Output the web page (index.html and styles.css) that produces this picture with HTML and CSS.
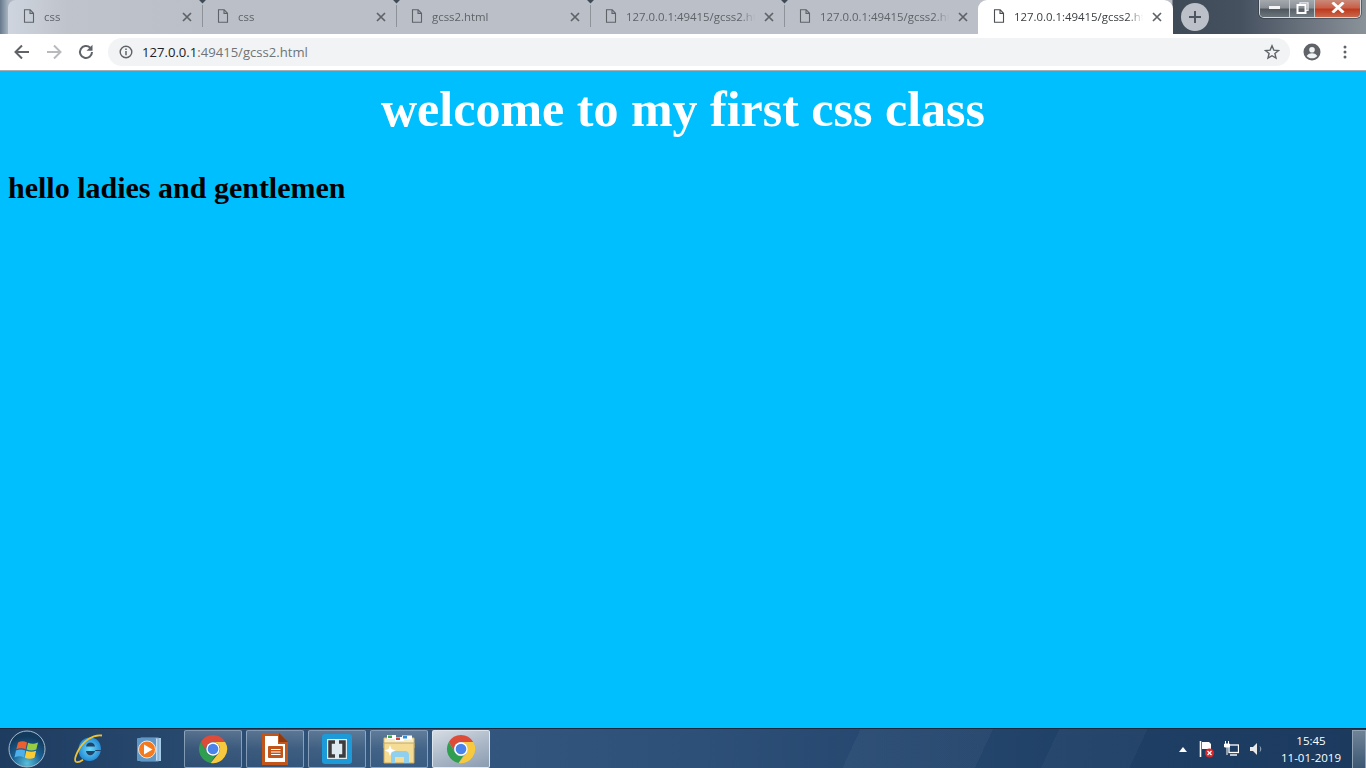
FILE: index.html
```html
<!DOCTYPE html>
<html lang="en">
<head>
<meta charset="utf-8">
<title>gcss2.html</title>
<link rel="stylesheet" href="styles.css">
</head>
<body>
<svg class="defs" width="0" height="0" aria-hidden="true">
  <symbol id="file" viewBox="0 0 12 14"><path d="M1.500 .8h5.700l3.300 3.400v9H1.500zM7 .8v3.600h3.500" fill="none" stroke="currentColor" stroke-width="1.100"/></symbol>
  <symbol id="close" viewBox="0 0 10 10"><path d="M1 1l8 8M9 1l-8 8" fill="none" stroke="currentColor" stroke-width="1.700"/></symbol>
  <symbol id="chrome" viewBox="0 0 32 32">
    <path d="M16 1A15 15 0 0 1 29 8.500H16A7.500 7.500 0 0 0 9.500 19.750L3 8.500A15 15 0 0 1 16 1z" fill="#dd4b39"/>
    <path d="M3 8.500L9.500 19.750A7.500 7.500 0 0 0 18.500 23L13.500 30.800A15 15 0 0 1 3 8.500z" fill="#2f9e4f"/>
    <path d="M29 8.500A15 15 0 0 1 13.500 30.800L22.500 19.750A7.500 7.500 0 0 0 16 8.500z" fill="#f7c93e"/>
    <circle cx="16" cy="16" r="7.200" fill="#fff"/><circle cx="16" cy="16" r="5.700" fill="#4a84ea"/>
  </symbol>
</svg>

<header class="strip">
  <div class="tabs">
    <div class="tab first"><svg class="ficon"><use href="#file"/></svg><span class="tlabel">css</span><svg class="x"><use href="#close"/></svg></div>
    <div class="tab"><svg class="ficon"><use href="#file"/></svg><span class="tlabel">css</span><svg class="x"><use href="#close"/></svg></div>
    <div class="tab"><svg class="ficon"><use href="#file"/></svg><span class="tlabel">gcss2.html</span><svg class="x"><use href="#close"/></svg></div>
    <div class="tab"><svg class="ficon"><use href="#file"/></svg><span class="tlabel">127.0.0.1:49415/gcss2.html</span><svg class="x"><use href="#close"/></svg></div>
    <div class="tab"><svg class="ficon"><use href="#file"/></svg><span class="tlabel">127.0.0.1:49415/gcss2.html</span><svg class="x"><use href="#close"/></svg></div>
    <div class="tab active"><svg class="ficon"><use href="#file"/></svg><span class="tlabel">127.0.0.1:49415/gcss2.html</span><svg class="x"><use href="#close"/></svg></div>
  </div>
  <div class="newtab"><svg width="14" height="14" viewBox="0 0 14 14"><path d="M7 1v12M1 7h12" stroke="#4f5660" stroke-width="2"/></svg></div>
  <div class="winctl">
    <div class="wbtn wmin"><span class="minbar"></span></div>
    <div class="wbtn wmax"><svg width="13" height="12" viewBox="0 0 13 12"><path d="M4 2.500V.8h8v7.500h-2.500" fill="none" stroke="#e8ecef" stroke-width="1.300"/><rect x="1.500" y="3" width="8" height="8" fill="none" stroke="#fff" stroke-width="2"/></svg></div>
    <div class="wbtn wclose"><svg width="16" height="11" viewBox="0 0 16 11"><path d="M2.500 .5l11 10M13.500 .5l-11 10" stroke="#fff" stroke-width="3"/></svg></div>
  </div>
</header>

<nav class="toolbar">
  <svg class="tbtn" width="18" height="18" viewBox="0 0 18 18"><path d="M16 9H3M9 2.500L2.500 9 9 15.500" fill="none" stroke="#5f6368" stroke-width="2"/></svg>
  <svg class="tbtn" width="18" height="18" viewBox="0 0 18 18"><path d="M2 9h13M9 2.500L15.500 9 9 15.500" fill="none" stroke="#b8babd" stroke-width="2"/></svg>
  <svg class="tbtn" width="18" height="18" viewBox="0 0 18 18"><path d="M15 9a6 6 0 1 1-1.800-4.300" fill="none" stroke="#5f6368" stroke-width="2"/><path d="M15.500 1.700v6h-6z" fill="#5f6368"/></svg>
  <div class="omnibox">
    <svg class="info" width="14" height="14" viewBox="0 0 14 14"><circle cx="7" cy="7" r="5.800" fill="none" stroke="#5f6368" stroke-width="1.400"/><path d="M7 6v4.300M7 3.500v1.500" stroke="#5f6368" stroke-width="1.500"/></svg>
    <span class="url"><span class="host">127.0.0.1</span>:49415/gcss2.html</span>
    <svg class="star" width="16" height="16" viewBox="0 0 16 16"><path d="M8 1.800l1.800 4.300 4.700.4-3.600 3 1.100 4.600L8 11.700l-4 2.400 1.100-4.600-3.600-3 4.700-.4z" fill="none" stroke="#5f6368" stroke-width="1.400"/></svg>
  </div>
  <svg class="avatar" width="18" height="18" viewBox="0 0 18 18"><circle cx="9" cy="9" r="8.500" fill="#5f6368"/><circle cx="9" cy="6.700" r="2.800" fill="#f1f3f4"/><path d="M3.700 13c1.300-2 3.300-2.700 5.300-2.700s4 .7 5.300 2.700c-1.300 1.500-3.200 2.300-5.300 2.300S5 14.500 3.700 13z" fill="#f1f3f4"/></svg>
  <svg class="menu" width="4" height="14" viewBox="0 0 4 14"><circle cx="2" cy="2" r="1.500" fill="#5f6368"/><circle cx="2" cy="7" r="1.500" fill="#5f6368"/><circle cx="2" cy="12" r="1.500" fill="#5f6368"/></svg>
</nav>

<main class="page">
  <h1 class="title">welcome to my first css class</h1>
  <h2 class="subtitle">hello ladies and gentlemen</h2>
</main>

<footer class="taskbar">
  <div class="orb"><svg width="38" height="38" viewBox="0 0 38 38">
    <defs><radialGradient id="orbg" cx="50%" cy="90%" r="75%"><stop offset="0" stop-color="#58c0dc"/><stop offset=".55" stop-color="#1a5f92"/><stop offset="1" stop-color="#123a5c"/></radialGradient></defs>
    <circle cx="19" cy="19" r="18" fill="url(#orbg)" stroke="#a8bccb" stroke-width="1"/>
    <path d="M10 12.500c3-1.800 6-1.800 9 0l-1.400 6.800c-3-1.500-6-1.500-9.300 0z" fill="#ee5f30"/>
    <path d="M20 12.700c3 1.500 6 1.500 10-.2l-1.700 7c-3.300 1.300-6.300 1.300-9.700 0z" fill="#97cc43"/>
    <path d="M8 20.500c3-1.500 6-1.500 9.300 0L16 27.500c-3-1.700-6-1.700-9.500 0z" fill="#4db0ea"/>
    <path d="M18.300 20.700c3.300 1.300 6.500 1.300 9.800 0l-1.600 7c-3.200 1.300-6.200 1.300-9.700 0z" fill="#fbcb34"/>
  </svg></div>
  <div class="pin pin-ie"><svg width="32" height="32" viewBox="0 0 32 32">
    <defs><radialGradient id="ieg" cx="50%" cy="50%" r="55%"><stop offset="0" stop-color="#6fdcf8"/><stop offset="1" stop-color="#1c84d4"/></radialGradient></defs>
    <path d="M17 4.500c7 0 11.500 5 11 13.500H13c.6 5.500 7.500 6 9.500-1H28c-1.300 7-6 11-11.500 11C9.500 28 5 23 5.500 15.500 6 9 11 4.500 17 4.500zM13 13.500h9c-.6-5.500-8.400-5.500-9 0z" fill="url(#ieg)" fill-rule="evenodd"/>
    <path d="M29 2.500C20 1 10 8 5 18c-2.500 5-4 9.500-2 10.800 1.700 1 4.500-.3 7-2" fill="none" stroke="#f0c22e" stroke-width="1.800"/>
  </svg></div>
  <div class="pin pin-wmp"><svg width="26" height="26" viewBox="0 0 26 26">
    <rect x="8" y="2" width="17" height="23" fill="#a6cbe8"/><rect x="5" y="2" width="17" height="23" fill="#c6dff2" stroke="#7aa6cc"/>
    <rect x="1" y="2" width="19" height="23" rx="1" fill="#5f98c6"/>
    <circle cx="11" cy="13.500" r="8.500" fill="#f47a20" stroke="#fff" stroke-width=".8"/><path d="M8 8.500l8.500 5-8.500 5z" fill="#fff"/>
  </svg></div>
  <div class="tbbtn"><svg width="30" height="30"><use href="#chrome"/></svg></div>
  <div class="tbbtn"><svg width="28" height="34" viewBox="0 0 28 34">
    <path d="M1 1h17l9 9v23H1z" fill="#c2551a"/><path d="M18 1l9 9h-9z" fill="#8c3c12"/><path d="M4 4h13v8h7v18H4z" fill="#fff"/>
    <rect x="7" y="14" width="15" height="12" rx="1" fill="#c2551a"/><path d="M10 17.500h9.500M10 20h9.500M10 22.500h9.500" stroke="#fff" stroke-width="1.200"/>
  </svg></div>
  <div class="tbbtn"><svg width="32" height="32" viewBox="0 0 32 32">
    <rect x="1" y="1" width="30" height="30" rx="3" fill="#1d9bd8"/><rect x="6" y="6" width="20" height="20" fill="#ddeaf2"/>
    <path d="M14 9h-5v14h5M18 9h5v14h-5" fill="none" stroke="#3c3c3c" stroke-width="3.500"/>
  </svg></div>
  <div class="tbbtn"><svg width="32" height="30" viewBox="0 0 32 30">
    <path d="M1 4h30v10H1z" fill="#f6ecc4" stroke="#d8bd72"/><rect x="4" y="1" width="9" height="4" fill="#fff"/><rect x="5" y="1.500" width="4" height="2.500" fill="#3aa846"/>
    <rect x="12" y="3" width="9" height="4" fill="#fff"/><rect x="13" y="3.500" width="4" height="2.500" fill="#d8402f"/>
    <rect x="19" y="1.500" width="10" height="4" fill="#fff"/><rect x="20" y="2" width="4" height="2.500" fill="#2d8fd8"/>
    <path d="M1 9h30v20H1z" fill="#f5dc94" stroke="#c8a85a"/>
    <path d="M8 29v-8c0-2.500 2-4 5-4h9c2.500 0 4 1.500 4 4v8h-5v-6H12v6z" fill="#8fd0ee"/><path d="M7 11l1.500 4 4 1.500-4 1.500L7 22l-1.500-4-4-1.500 4-1.500z" fill="#fff"/>
  </svg></div>
  <div class="tbbtn current"><svg width="30" height="30"><use href="#chrome"/></svg></div>
  <div class="tray">
    <svg class="t-arrow" width="8" height="5" viewBox="0 0 8 5"><path d="M4 0l4 5H0z" fill="#fff"/></svg>
    <svg class="t-flag" width="15" height="17" viewBox="0 0 15 17"><path d="M1.500 0v16" stroke="#fff" stroke-width="1.600"/><path d="M3 1h7l2 2v5H3z" fill="#fff"/><circle cx="10.500" cy="12" r="4.500" fill="#d8262c"/><path d="M8.500 10l4 4M12.500 10l-4 4" stroke="#fff" stroke-width="1.300"/></svg>
    <svg class="t-net" width="15" height="16" viewBox="0 0 15 16"><path d="M1.500 0v3M4.500 0v3M0.500 3h5v3h-5zM3 6v8" stroke="#fff" fill="#fff"/><rect x="5" y="4" width="9.500" height="7.500" fill="none" stroke="#fff" stroke-width="1.300"/><path d="M6 14h7" stroke="#fff" stroke-width="1.400"/></svg>
    <svg class="t-vol" width="14" height="14" viewBox="0 0 14 14"><path d="M0 5h3l4-4v12l-4-4H0z" fill="#e8e8e8"/><path d="M10 4.500c1 1.500 1 3.500 0 5" fill="none" stroke="#9fb0c0" stroke-width="1"/></svg>
    <div class="clock"><span>15:45</span><span>11-01-2019</span></div>
    <div class="showdesk"></div>
  </div>
</footer>
</body>
</html>
```
FILE: styles.css
```css
* { box-sizing: border-box; }
html, body { height: 100%; }
body {
  margin: 0;
  width: 1366px;
  height: 768px;
  overflow: hidden;
  display: flex;
  flex-direction: column;
  background: #00bfff;
  font-family: "Open Sans", "Liberation Sans", sans-serif;
}
.defs { position: absolute; }

/* Tab strip */
.strip {
  height: 34px;
  flex: none;
  display: flex;
  align-items: stretch;
  background: linear-gradient(90deg, #66798c 0, #a9b4c0 8px, #bcc0c8 20px, #bcc0c8 1172px, #3f4a57 1173px, #465160 1240px, #8a9299 1366px);
}
.tabs { display: flex; margin-left: 8px; }
.tab {
  width: 194px;
  display: flex;
  align-items: center;
  position: relative;
  padding-left: 15px;
  color: #5f6368;
  background: #bbbfc7;
}
.tab::before {
  content: "";
  position: absolute;
  left: 0;
  top: 5px;
  bottom: 7px;
  width: 1px;
  background: #8e939a;
}
.tab::after {
  content: "";
  position: absolute;
  left: -3px;
  top: -5px;
  width: 7px;
  height: 7px;
  background: #3f4a57;
  transform: rotate(45deg);
}
.tab.first { background: linear-gradient(90deg, #ced5de, #bfc3cb 60px, #bbbfc7); border-radius: 8px 0 0 0; }
.tab.first::before, .tab.first::after, .tab.active::before, .tab.active::after { display: none; }
.tab.active {
  width: 195px;
  background: #fff;
  color: #3c4043;
  border-radius: 9px 9px 0 0;
}
.ficon { width: 12px; height: 14px; flex: none; margin-top: -2px; color: #5f6368; }
.active .ficon { color: #4a4e52; }
.tlabel {
  margin-left: 9px;
  width: 129px;
  flex: none;
  font-size: 11.400px;
  line-height: 14px;
  margin-top: -1px;
  white-space: nowrap;
  overflow: hidden;
  -webkit-mask-image: linear-gradient(90deg, #000 114px, transparent 129px);
  mask-image: linear-gradient(90deg, #000 114px, transparent 129px);
}
.x { width: 10px; height: 10px; flex: none; margin-left: 9px; margin-top: -1px; color: #5f6368; }
.newtab {
  width: 28px;
  height: 28px;
  margin: 3px 0 0 8px;
  border-radius: 50%;
  background: #bcc0c8;
  display: flex;
  align-items: center;
  justify-content: center;
}
.winctl {
  margin-left: auto;
  margin-right: 5px;
  width: 102px;
  height: 18px;
  display: flex;
  border: 1px solid #d4d8dc;
  border-top: 0;
  border-radius: 0 0 5px 5px;
  box-shadow: 0 0 0 1px rgba(40, 48, 56, .5);
  overflow: hidden;
}
.wbtn { display: flex; align-items: center; justify-content: center; padding-bottom: 2px; }
.wmin { width: 29px; background: linear-gradient(180deg, #a4a9ae, #8a9096 45%, #50585f 55%, #6d757c); padding-bottom: 3px; }
.minbar { width: 11px; height: 3px; background: #f4f5f6; }
.wmax { width: 26px; border-left: 1px solid #c4c9ce; border-right: 1px solid #c4c9ce; background: linear-gradient(180deg, #a4a9ae, #8a9096 45%, #5a6269 55%, #747c83); }
.wclose { flex: 1; background: linear-gradient(180deg, #c98a78, #c9604a 45%, #c03a1e 55%, #c9684c); }

/* Toolbar */
.toolbar {
  height: 37px;
  flex: none;
  background: #fff;
  border-bottom: 1px solid #a9adb0;
  display: flex;
  align-items: center;
  padding-left: 13px;
}
.tbtn { flex: none; margin-right: 14px; }
.omnibox {
  width: 1182px;
  height: 28px;
  margin-left: -1px;
  background: #f1f3f4;
  border-radius: 14px;
  display: flex;
  align-items: center;
  padding-left: 11px;
}
.info { flex: none; }
.url { margin-left: 9px; font-size: 13.100px; color: #6f7377; white-space: nowrap; }
.host { color: #202124; }
.star { margin-left: auto; margin-right: 10px; }
.avatar { margin-left: 13px; flex: none; }
.menu { margin-left: 22px; flex: none; }

/* Page */
.page {
  flex: 1;
  min-height: 0;
  background: #00bfff;
  padding: 0 8px;
  font-family: "Liberation Serif", "Times New Roman", serif;
  overflow: hidden;
}
.title {
  margin: 11px 0 0;
  font-size: 50px;
  line-height: 55px;
  text-align: center;
  color: #fff;
}
.subtitle {
  margin: 34px 0 0;
  font-size: 30px;
  line-height: 34px;
  color: #000;
}

/* Taskbar */
.taskbar {
  height: 40px;
  flex: none;
  display: flex;
  align-items: center;
  padding: 1px 0 0 8px;
  border-top: 1px solid #16293e;
  background:
    linear-gradient(115deg, transparent 0 780px, rgba(255,255,255,.035) 780px 900px, transparent 900px 960px, rgba(255,255,255,.03) 960px 1040px, transparent 1040px),
    linear-gradient(90deg, #1e3c60 0, #34587f 400px, #2d5078 700px, #1f3f66 1100px, #1c3a5e 1366px);
}
.orb { width: 38px; height: 38px; flex: none; }
.pin { width: 60px; height: 38px; flex: none; display: flex; align-items: center; justify-content: center; }
.pin-ie { margin-left: 13px; }
.pin-wmp { margin-right: 5px; }
.tbbtn {
  width: 58px;
  height: 38px;
  flex: none;
  margin-right: 4px;
  border: 1px solid rgba(190, 210, 230, .55);
  border-radius: 2px;
  display: flex;
  align-items: center;
  justify-content: center;
  background: linear-gradient(180deg, rgba(255,255,255,.22), rgba(255,255,255,.08) 50%, rgba(255,255,255,.03));
}
.tbbtn.current {
  border-color: rgba(230, 238, 245, .85);
  background: linear-gradient(160deg, #d6dce4, #a9b6c6 55%, #8b9cb0);
}
.tray { margin-left: auto; display: flex; align-items: center; height: 38px; }
.t-arrow { margin-right: 12px; }
.t-flag { margin-right: 10px; }
.t-net { margin-right: 11px; }
.t-vol { margin-right: 7px; }
.clock {
  width: 80px;
  margin-right: 1px;
  display: flex;
  flex-direction: column;
  align-items: center;
  font-size: 11.500px;
  line-height: 17px;
  color: #fff;
}
.showdesk {
  width: 14px;
  height: 39px;
  border: 1px solid #8fa3b6;
  background: linear-gradient(180deg, #6f8397, #3d5873);
}
```
